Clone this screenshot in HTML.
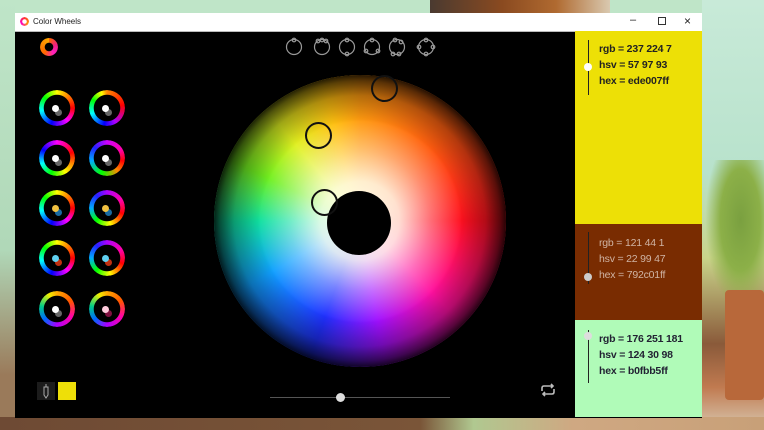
<!DOCTYPE html>
<html><head><meta charset="utf-8"><style>
*{margin:0;padding:0;box-sizing:border-box}
body{width:764px;height:430px;overflow:hidden;position:relative;background:#bfe5c8;font-family:"Liberation Sans",sans-serif}
.abs{position:absolute}
.win{left:15px;top:13px;width:687px;height:405px;background:#000}
.title{left:15px;top:13px;width:687px;height:18px;background:#fff;font-size:8px;color:#222}
.sw{position:absolute;width:36px;height:36px;border-radius:50%;-webkit-mask:radial-gradient(circle,transparent 13px,#000 13.5px);mask:radial-gradient(circle,transparent 13px,#000 13.5px)}
.d{position:absolute;width:7px;height:7px;border-radius:50%}
.txt{position:absolute;font-size:10.5px;line-height:16px;font-weight:bold;letter-spacing:-0.2px}
</style></head><body>
<div class="abs" style="left:430px;top:0;width:180px;height:13px;background:linear-gradient(90deg,#4a3a30,#8a4a20 40%,#b06a30 70%,#d9c9b0)"></div>
<div class="abs" style="left:702px;top:0;width:62px;height:430px;background:linear-gradient(180deg,#c8ead8 0%,#b8e2cc 40%,#c9d48a 60%,#8a5a3a 80%,#c07a50 90%,#d8c8b0 100%)"></div>
<div class="abs" style="left:705px;top:160px;width:59px;height:150px;background:radial-gradient(ellipse at 60% 40%,#7aa040 0,#8cb048 40%,transparent 70%)"></div>
<div class="abs" style="left:725px;top:290px;width:39px;height:110px;background:#b8683a;border-radius:4px"></div>
<div class="abs" style="left:0;top:417px;width:764px;height:13px;background:linear-gradient(90deg,#6e4a34 0,#7a5538 55%,#b0c890 62%,#cfa882 75%,#c8a078)"></div>
<div class="abs" style="left:0;top:0;width:15px;height:417px;background:linear-gradient(180deg,#bfe5c8,#b0d8b8 60%,#9a7a5a 90%)"></div>

<div class="abs win"></div>
<div class="abs title">
 <div class="abs" style="left:5px;top:4px;width:9px;height:9px;border-radius:50%;background:conic-gradient(#f33,#f90,#f0c,#f33);-webkit-mask:radial-gradient(circle,transparent 2px,#000 2.5px)"></div>
 <div class="abs" style="left:18px;top:4px">Color Wheels</div>
 <div class="abs" style="left:615px;top:1px;font-size:11px">–</div>
 <div class="abs" style="left:643px;top:4px;width:8px;height:8px;border:1px solid #333"></div>
 <div class="abs" style="left:669px;top:1px;font-size:12px">×</div>
</div>
<div class="abs" style="left:15px;top:31px;width:560px;height:1px;background:#bbb"></div>

<div class="abs" style="left:40px;top:38px;width:18px;height:18px;border-radius:50%;background:conic-gradient(#f60,#f02080,#ff20c0,#f60 60%,#fa0);-webkit-mask:radial-gradient(circle,transparent 4px,#000 4.5px)"></div>

<svg class="abs" style="left:280px;top:34px" width="160" height="26" fill="none" stroke="#999" stroke-width="1.2">
 <circle cx="14" cy="13" r="7.5"/><circle cx="14" cy="6" r="1.8"/>
 <circle cx="42" cy="13" r="7.5"/><circle cx="38" cy="7" r="1.8"/><circle cx="42" cy="6" r="1.8"/><circle cx="46" cy="7" r="1.8"/>
 <circle cx="67" cy="13" r="7.5"/><circle cx="67" cy="6" r="1.8"/><circle cx="67" cy="20" r="1.8"/>
 <circle cx="92" cy="13" r="7.5"/><circle cx="92" cy="6" r="1.8"/><circle cx="86" cy="17" r="1.8"/><circle cx="98" cy="17" r="1.8"/>
 <circle cx="117" cy="13" r="7.5"/><circle cx="115" cy="6" r="1.8"/><circle cx="121" cy="8" r="1.8"/><circle cx="113" cy="20" r="1.8"/><circle cx="119" cy="20" r="1.8"/>
 <circle cx="146" cy="13" r="7.5"/><circle cx="146" cy="6" r="1.8"/><circle cx="153" cy="13" r="1.8"/><circle cx="146" cy="20" r="1.8"/><circle cx="139" cy="13" r="1.8"/>
</svg>

<div class="abs" style="left:214px;top:75px;width:292px;height:292px;border-radius:50%;background:conic-gradient(#ff9a10 0deg,#ff5a10 45deg,#ff1020 90deg,#ff10a0 135deg,#a010ff 170deg,#2030ff 200deg,#10a0ff 240deg,#10e0a0 270deg,#70f020 295deg,#e0f020 320deg,#ffc010 345deg,#ff9a10 360deg)"></div>
<svg class="abs" style="left:214px;top:75px" width="292" height="292">
 <defs>
  <radialGradient id="wh" cx="146" cy="146" r="146" gradientUnits="userSpaceOnUse">
   <stop offset="0" stop-color="#fffff0" stop-opacity="1"/>
   <stop offset="0.27" stop-color="#fffff0" stop-opacity="0.85"/>
   <stop offset="0.48" stop-color="#ffffff" stop-opacity="0.4"/>
   <stop offset="0.7" stop-color="#ffffff" stop-opacity="0"/>
  </radialGradient>
  <radialGradient id="dk" cx="146" cy="146" r="146" gradientUnits="userSpaceOnUse">
   <stop offset="0.68" stop-color="#000" stop-opacity="0"/>
   <stop offset="0.86" stop-color="#000" stop-opacity="0.3"/>
   <stop offset="0.96" stop-color="#000" stop-opacity="0.65"/>
   <stop offset="1" stop-color="#000" stop-opacity="0.85"/>
  </radialGradient>
 </defs>
 <circle cx="146" cy="146" r="146" fill="url(#wh)"/>
 <circle cx="146" cy="146" r="146" fill="url(#dk)"/>
</svg>
<div class="abs" style="left:327px;top:191px;width:64px;height:64px;border-radius:50%;background:#000"></div>
<div class="abs" style="left:371px;top:75px;width:27px;height:27px;border-radius:50%;border:2px solid #111"></div>
<div class="abs" style="left:305px;top:122px;width:27px;height:27px;border-radius:50%;border:2px solid #111"></div>
<div class="abs" style="left:311px;top:189px;width:27px;height:27px;border-radius:50%;border:2px solid #111"></div>

<div class="sw" style="left:39px;top:90px;background:conic-gradient(#ff0 0deg,#f80 40deg,#f00 90deg,#f0f 140deg,#00f 200deg,#0ff 260deg,#0f0 310deg,#ff0)"></div>
<div class="sw" style="left:89px;top:90px;background:conic-gradient(#f80,#f00 80deg,#a0f 150deg,#00f 190deg,#0ff 250deg,#0f0 300deg,#ff0 340deg,#f80)"></div>
<div class="sw" style="left:39px;top:140px;background:conic-gradient(#f0f,#f00 70deg,#f80 110deg,#ff0 150deg,#0f0 200deg,#0ff 250deg,#00f 300deg,#f0f)"></div>
<div class="sw" style="left:89px;top:140px;background:conic-gradient(#c0f,#f0a 60deg,#f00 100deg,#f80 140deg,#0f0 200deg,#0af 260deg,#22f 310deg,#c0f)"></div>
<div class="sw" style="left:39px;top:190px;background:conic-gradient(#ff0,#f80 40deg,#f00 90deg,#f0f 140deg,#00f 200deg,#0ff 260deg,#0f0 310deg,#ff0)"></div>
<div class="sw" style="left:89px;top:190px;background:conic-gradient(#a0f,#f0a 60deg,#f00 110deg,#ff0 170deg,#0f0 220deg,#0af 270deg,#22f 320deg,#a0f)"></div>
<div class="sw" style="left:39px;top:240px;background:conic-gradient(#ff0,#f80 40deg,#f00 90deg,#f0f 140deg,#00f 200deg,#0ff 260deg,#0f0 310deg,#ff0)"></div>
<div class="sw" style="left:89px;top:240px;background:conic-gradient(#a0f,#f0a 60deg,#f00 110deg,#ff0 170deg,#0f0 220deg,#0af 270deg,#22f 320deg,#a0f)"></div>
<div class="sw" style="left:39px;top:291px;background:conic-gradient(#fa0,#f50 60deg,#f0a 120deg,#a0f 180deg,#06f 230deg,#0c8 280deg,#ee0 330deg,#fa0)"></div>
<div class="sw" style="left:89px;top:291px;background:conic-gradient(#fa0,#f50 60deg,#f0a 120deg,#a0f 180deg,#06f 230deg,#0c8 280deg,#ee0 330deg,#fa0)"></div>
<div class="d" style="left:55px;top:109px;background:#666"></div><div class="d" style="left:52px;top:105px;background:#fff"></div>
<div class="d" style="left:105px;top:109px;background:#666"></div><div class="d" style="left:102px;top:105px;background:#fff"></div>
<div class="d" style="left:55px;top:159px;background:#666"></div><div class="d" style="left:52px;top:155px;background:#fff"></div>
<div class="d" style="left:105px;top:159px;background:#666"></div><div class="d" style="left:102px;top:155px;background:#fff"></div>
<div class="d" style="left:55px;top:209px;background:#1a6aa0"></div><div class="d" style="left:52px;top:205px;background:#f0c040"></div>
<div class="d" style="left:105px;top:209px;background:#1a6aa0"></div><div class="d" style="left:102px;top:205px;background:#f0c040"></div>
<div class="d" style="left:55px;top:259px;background:#c03010"></div><div class="d" style="left:52px;top:255px;background:#60d0f0"></div>
<div class="d" style="left:105px;top:259px;background:#c03010"></div><div class="d" style="left:102px;top:255px;background:#60d0f0"></div>
<div class="d" style="left:55px;top:310px;background:#666"></div><div class="d" style="left:52px;top:306px;background:#fff"></div>
<div class="d" style="left:105px;top:310px;background:#801040"></div><div class="d" style="left:102px;top:306px;background:#fcd"></div>

<div class="abs" style="left:37px;top:382px;width:18px;height:18px;background:#1c1c1c"></div>
<svg class="abs" style="left:37px;top:382px" width="18" height="18" fill="none" stroke="#aaa" stroke-width="1"><path d="M9 2v3M7 5h4v8l-2 3-2-3z"/></svg>
<div class="abs" style="left:58px;top:382px;width:18px;height:18px;background:#eedf08"></div>

<div class="abs" style="left:270px;top:397px;width:180px;height:1px;background:#555"></div>
<div class="abs" style="left:336px;top:393px;width:9px;height:9px;border-radius:50%;background:#ddd"></div>
<svg class="abs" style="left:539px;top:381px" width="18" height="18" fill="none" stroke="#bbb" stroke-width="1.6"><path d="M3 10V7q0-2 2-2h9M12 3l2 2-2 2M15 8v3q0 2-2 2H4M6 15l-2-2 2-2"/></svg>

<div class="abs" style="left:575px;top:31px;width:127px;height:193px;background:#ede006"></div>
<div class="abs" style="left:575px;top:224px;width:127px;height:96px;background:#792c01"></div>
<div class="abs" style="left:575px;top:320px;width:127px;height:97px;background:#b0fbb8"></div>
<div class="abs" style="left:588px;top:40px;width:1px;height:55px;background:#222"></div>
<div class="abs" style="left:584px;top:63px;width:8px;height:8px;border-radius:50%;background:#fff"></div>
<div class="txt" style="left:599px;top:41px;color:#222">rgb = 237 224 7<br>hsv = 57 97 93<br>hex = ede007ff</div>
<div class="abs" style="left:588px;top:232px;width:1px;height:52px;background:#222"></div>
<div class="abs" style="left:584px;top:273px;width:8px;height:8px;border-radius:50%;background:#ccc"></div>
<div class="txt" style="left:599px;top:235px;color:#d0b4a4;font-weight:normal">rgb = 121 44 1<br>hsv = 22 99 47<br>hex = 792c01ff</div>
<div class="abs" style="left:588px;top:330px;width:1px;height:53px;background:#222"></div>
<div class="abs" style="left:584px;top:332px;width:8px;height:8px;border-radius:50%;background:#ddd"></div>
<div class="txt" style="left:599px;top:331px;color:#223">rgb = 176 251 181<br>hsv = 124 30 98<br>hex = b0fbb5ff</div>
</body></html>
